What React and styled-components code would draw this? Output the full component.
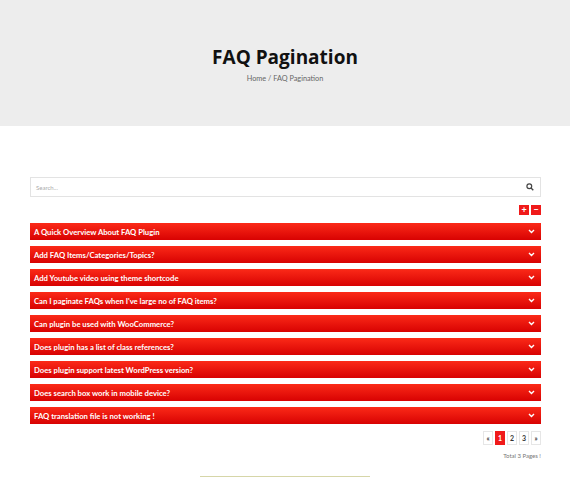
import React from 'react'
import { styled, createGlobalStyle } from 'styled-components';

const Global = createGlobalStyle`
  html, body { margin: 0; padding: 0; background: #fff; }
  body { font-family: Lato, "Liberation Sans", sans-serif; }
`;

const Banner = styled.header`
  height: 126px;
  background: #ededed;
  display: flex;
  flex-direction: column;
  align-items: center;
  padding-top: 45px;
  box-sizing: border-box;
`;

const Title = styled.h1`
  margin: 0;
  font-family: "Open Sans", sans-serif;
  font-weight: 700;
  font-size: 19px;
  line-height: 25px;
  color: #111;
`;

const Crumbs = styled.div`
  margin-top: 4px;
  font-size: 7.3px;
  color: #666;
`;

const Main = styled.main`
  padding: 51px 29px 0 30px;
`;

const SearchBox = styled.div`
  height: 20px;
  border: 1px solid #e3e3e3;
  box-sizing: border-box;
  display: flex;
  align-items: center;
  justify-content: space-between;
  padding: 0 6px 0 5px;
  font-size: 6px;
  color: #aaa;
`;

const Tools = styled.div`
  display: flex;
  justify-content: flex-end;
  gap: 2px;
  margin-top: 8px;
`;

const ToolBtn = styled.span`
  width: 10px;
  height: 10px;
  background: #f01a1a;
  color: #fff;
  font-size: 9px;
  font-weight: 700;
  line-height: 10px;
  text-align: center;
`;

const List = styled.div`
  margin-top: 8px;
  display: flex;
  flex-direction: column;
  gap: 6px;
`;

const Row = styled.div`
  height: 17px;
  background: linear-gradient(#fb2a18, #d80202);
  display: flex;
  align-items: center;
  justify-content: space-between;
  padding: 0 6px 0 4px;
  color: #fff;
  font-weight: 700;
  font-size: 7.7px;
`;

const Pager = styled.div`
  display: flex;
  justify-content: flex-end;
  gap: 2px;
  margin-top: 7px;
`;

const Page = styled.span`
  width: 10px;
  height: 14px;
  box-sizing: border-box;
  border: 1px solid ${p => (p.$on ? '#f01a1a' : '#e6e6e6')};
  background: ${p => (p.$on ? '#f01a1a' : '#fff')};
  color: ${p => (p.$on ? '#fff' : '#333')};
  font-size: 7px;
  line-height: 12px;
  text-align: center;
  font-weight: 700;
`;

const Total = styled.div`
  text-align: right;
  font-size: 6px;
  line-height: 8px;
  color: #777;
  margin-top: 7px;
`;

const Rule = styled.div`
  width: 170px;
  height: 1px;
  background: #d6d6a8;
  margin: 16px 0 0 170px;
`;

const Chevron = () => (
  <svg width="7" height="5" viewBox="0 0 7 5">
    <path d="M1 1l2.5 2.5L6 1" stroke="#fff" strokeWidth="1.4" fill="none" />
  </svg>
);

const faqs = [
  'A Quick Overview About FAQ Plugin',
  'Add FAQ Items/Categories/Topics?',
  'Add Youtube video using theme shortcode',
  "Can I paginate FAQs when I've large no of FAQ items?",
  'Can plugin be used with WooCommerce?',
  'Does plugin has a list of class references?',
  'Does plugin support latest WordPress version?',
  'Does search box work in mobile device?',
  'FAQ translation file is not working !',
];

function App() {
  return (
    <>
      <Global />
      <Banner>
        <Title>FAQ Pagination</Title>
        <Crumbs>Home / FAQ Pagination</Crumbs>
      </Banner>
      <Main>
        <SearchBox>
          <span>Search...</span>
          <svg width="8" height="8" viewBox="0 0 8 8">
            <circle cx="3.3" cy="3.3" r="2.4" stroke="#444" strokeWidth="1.2" fill="none" />
            <path d="M5 5l2.3 2.3" stroke="#444" strokeWidth="1.3" />
          </svg>
        </SearchBox>
        <Tools>
          <ToolBtn>+</ToolBtn>
          <ToolBtn>−</ToolBtn>
        </Tools>
        <List>
          {faqs.map(q => (
            <Row key={q}>
              <span>{q}</span>
              <Chevron />
            </Row>
          ))}
        </List>
        <Pager>
          <Page>«</Page>
          <Page $on>1</Page>
          <Page>2</Page>
          <Page>3</Page>
          <Page>»</Page>
        </Pager>
        <Total>Total 3 Pages !</Total>
        <Rule />
      </Main>
    </>
  )
}

export default App;
